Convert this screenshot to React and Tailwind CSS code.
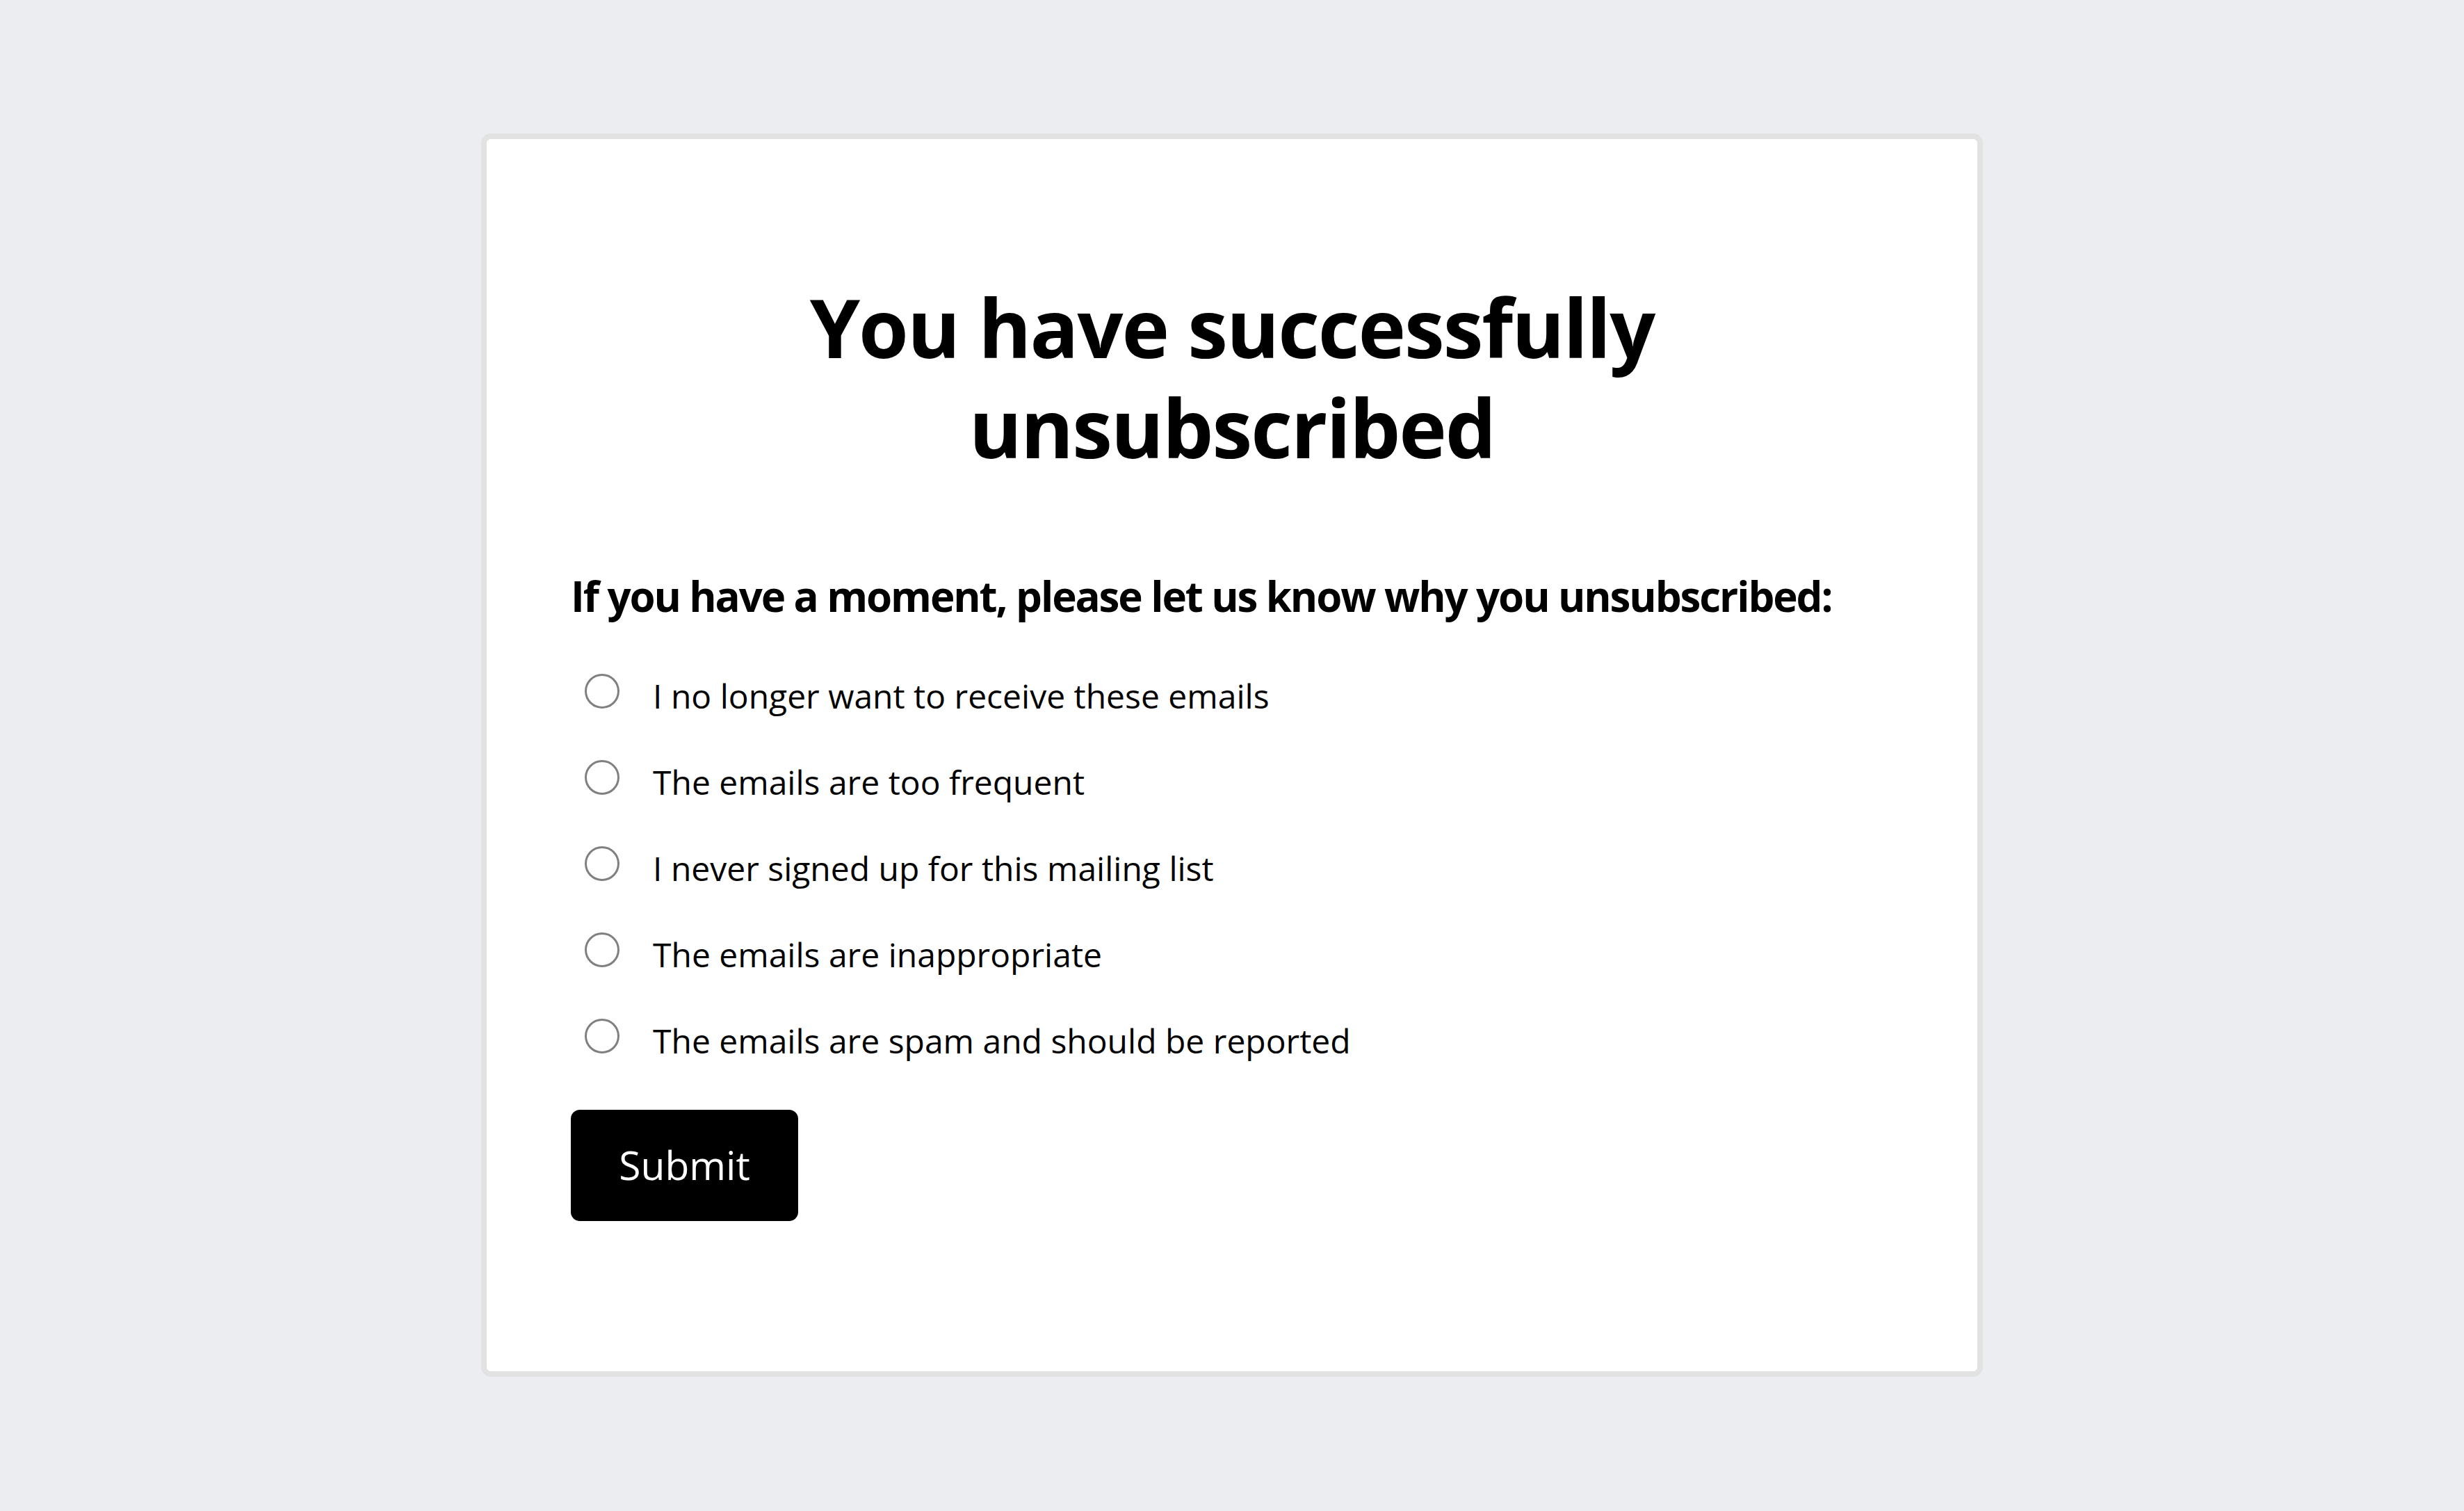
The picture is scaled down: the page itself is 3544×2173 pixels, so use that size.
import React, { useState } from 'react';

const reasons = [
  'I no longer want to receive these emails',
  'The emails are too frequent',
  'I never signed up for this mailing list',
  'The emails are inappropriate',
  'The emails are spam and should be reported',
];

const App = () => {
  const [selected, setSelected] = useState(null);

  return (
    <div
      className="min-h-screen bg-[#ecedf1] pt-[192px] pb-[193px]"
      style={{ fontFamily: '"Open Sans", "Noto Sans", sans-serif' }}
    >
      <div className="mx-auto w-[2160px] bg-white border-8 border-[#e2e2e2] rounded-[14px] px-[121px] pt-[198px] pb-[216px] text-black">
        {/* Title */}
        <h1 className="text-center font-bold text-[116px] leading-[144px] tracking-[-2px] mx-auto w-[1300px]">
          You have successfully unsubscribed
        </h1>

        {/* Question */}
        <p className="mt-[126px] font-bold text-[60px] leading-[90px] tracking-[-2.1px] whitespace-nowrap">
          If you have a moment, please let us know why you unsubscribed:
        </p>

        {/* Reasons */}
        <div className="mt-[63px] flex flex-col gap-[52px]">
          {reasons.map((reason, index) => (
            <label
              key={index}
              className="flex items-start cursor-pointer"
              onClick={() => setSelected(index)}
            >
              <span className="mt-[4px] ml-[20px] mr-[48px] w-[50px] h-[50px] rounded-full border-[3px] border-[#808080] flex items-center justify-center shrink-0">
                {selected === index && (
                  <span className="w-[26px] h-[26px] rounded-full bg-black" />
                )}
              </span>
              <span className="text-[48px] leading-[72px]">{reason}</span>
            </label>
          ))}
        </div>

        {/* Submit */}
        <button className="mt-[63px] w-[327px] h-[160px] bg-black text-white rounded-[13px] text-[57px] flex items-center justify-center">
          Submit
        </button>
      </div>
    </div>
  );
};

export default App;
